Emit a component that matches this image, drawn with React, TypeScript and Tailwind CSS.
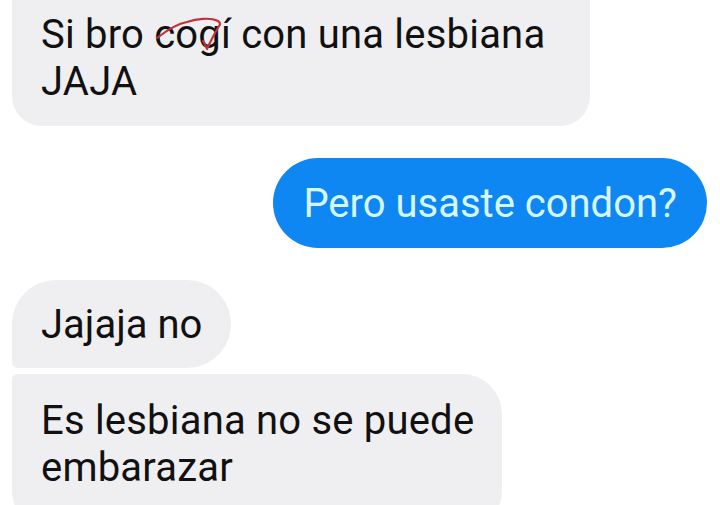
export default function App() {
  return (
    <div className="h-[505px] w-[720px] overflow-hidden bg-white font-['Roboto',sans-serif] text-[40px] leading-[47px] text-[#111111]">
      <div className="flex flex-col">
        {/* first incoming message, cut off at the top */}
        <div className="relative -mt-[30px] ml-[12px] w-[578px] rounded-[30px] bg-[#efeff1] pt-[41px] pb-[21px] pl-[29px]">
          <p className="tracking-[0.2px]">
            Si bro cogí con una lesbiana
            <br />
            JAJA
          </p>
          {/* red scribble over "cogí" */}
          <svg
            className="pointer-events-none absolute left-[128px] top-[30px]"
            width="100"
            height="60"
            viewBox="0 0 100 60"
          >
            <path
              d="M17 38 C 26 31, 36 24, 47 22 C 56 19, 70 17, 78 21 C 81 23, 80 25, 79 26 C 75 33, 70 42, 67 49 C 66 46, 64 43, 63 41"
              fill="none"
              stroke="#c3303b"
              strokeWidth="2.2"
              strokeLinecap="round"
              strokeLinejoin="round"
            />
          </svg>
        </div>

        {/* outgoing */}
        <div className="mt-[32px] mr-[13px] flex justify-end">
          <div className="flex h-[90px] items-center rounded-full bg-[#0f87f2] px-[30px] text-[#d6f7ff]">
            Pero usaste condon?
          </div>
        </div>

        {/* incoming group */}
        <div className="mt-[32px] ml-[12px] flex flex-col items-start gap-[6px]">
          <div className="flex h-[88px] items-center rounded-[44px] rounded-bl-[5px] bg-[#efeff1] px-[29px]">
            Jajaja no
          </div>
          <div className="w-[490px] rounded-[40px] rounded-tl-[5px] bg-[#efeff1] pt-[23px] pb-[40px] pl-[29px]">
            <p className="tracking-[0.2px]">
              Es lesbiana no se puede
              <br />
              embarazar
            </p>
          </div>
        </div>
      </div>
    </div>
  );
}
